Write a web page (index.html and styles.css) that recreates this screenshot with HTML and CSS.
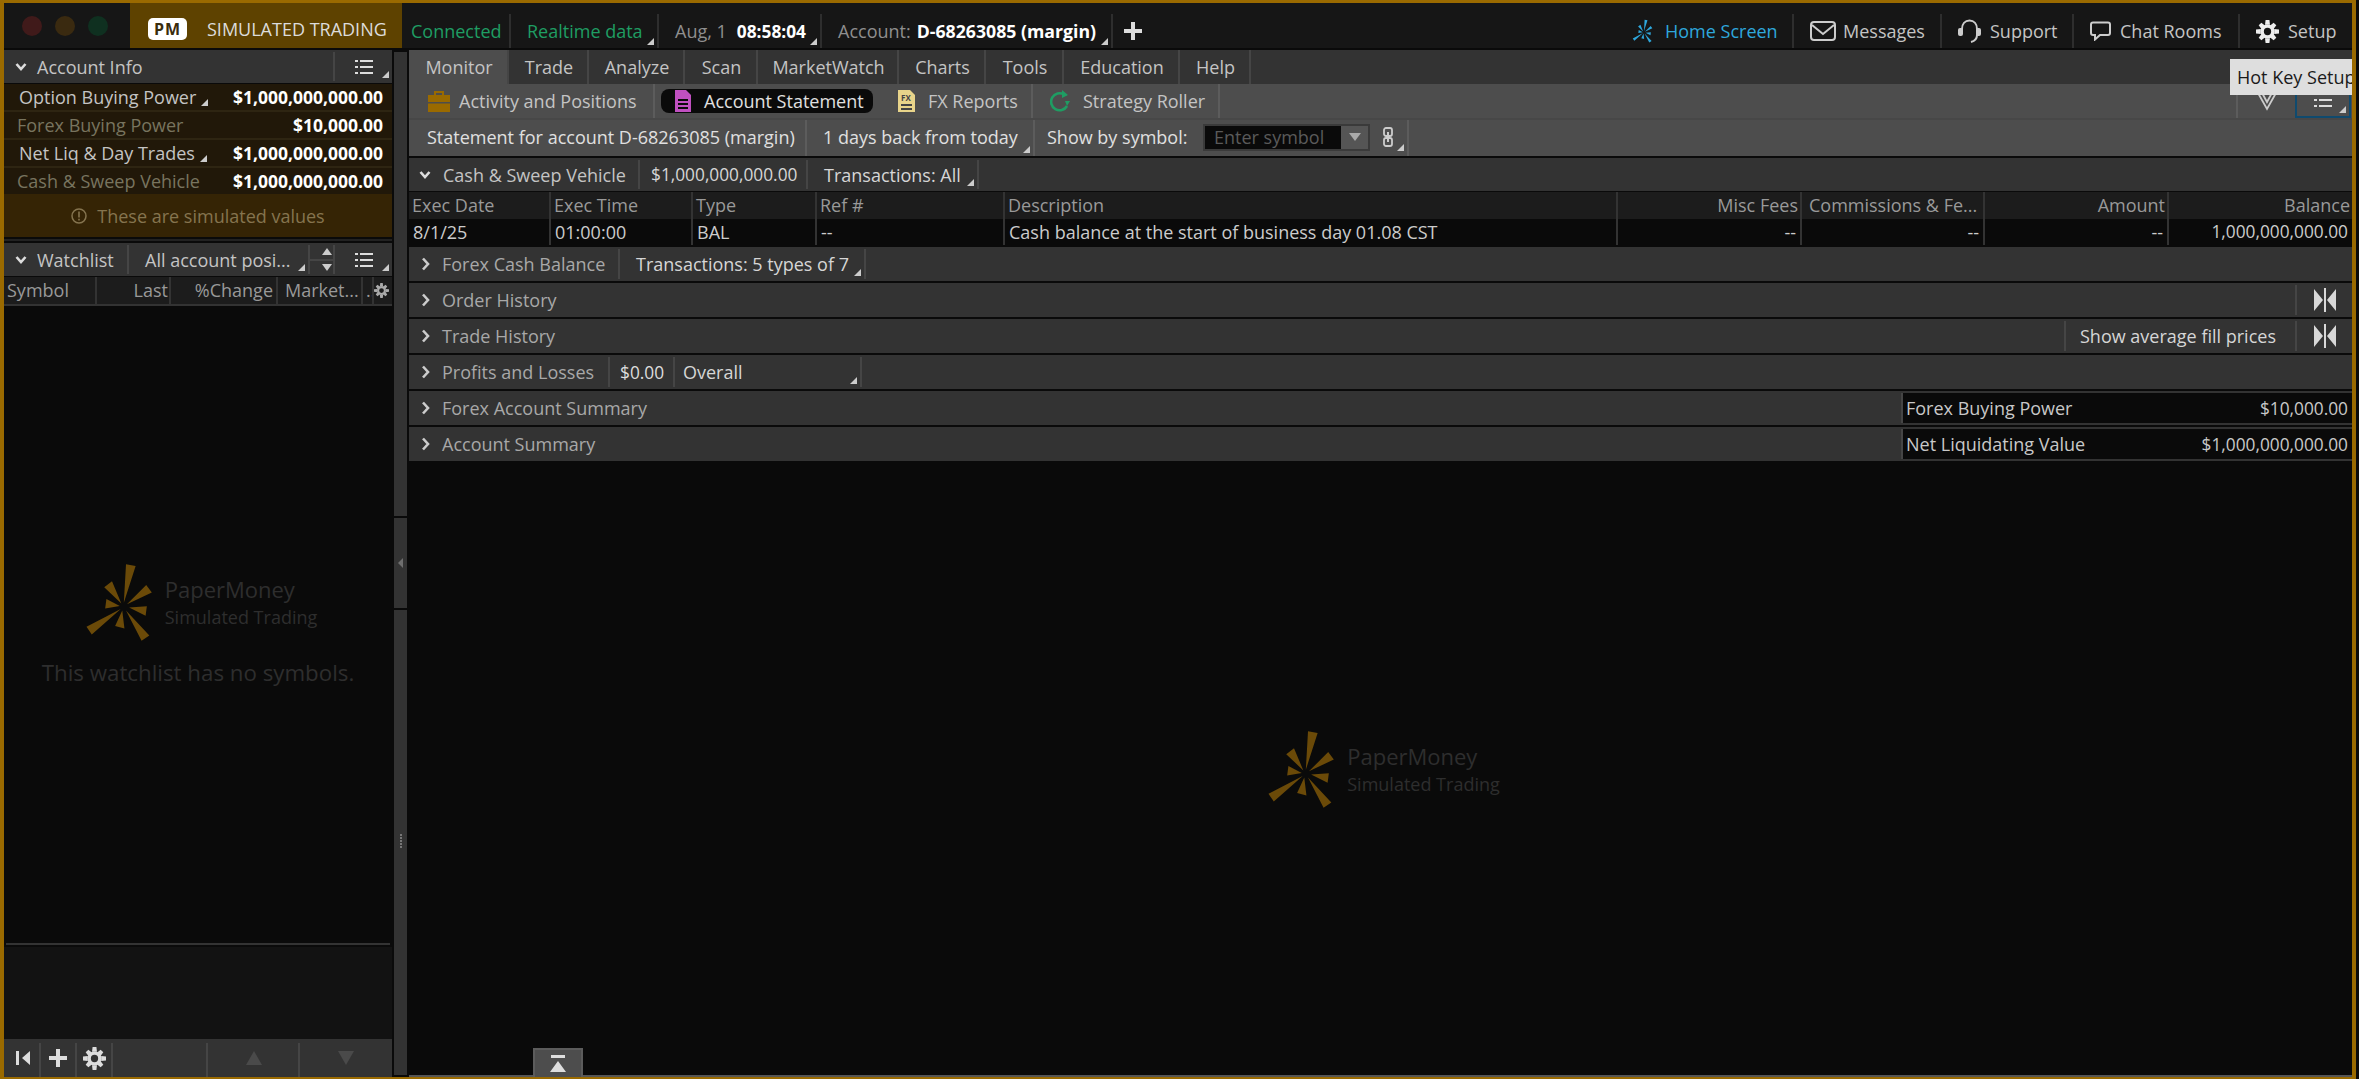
FILE: index.html
```html
<!DOCTYPE html>
<html>
<head lang="en">
    <meta charset="UTF-8">
    <title>Simulated Trading</title>
    <link rel="stylesheet" href="styles.css">
</head>
<body>
<svg class="sprite" width="0" height="0">
    <symbol id="burst" viewBox="70 60 225 255">
        <path d="M205 66L236 72L198 190Z M270 133L288 157L208 195Z M215 205L272 201L268 232Z M205 215L280 295L255 312Z M193 215L200 273L170 265Z M188 210L78 267L95 292Z M185 200L142 178L138 208Z M190 192L135 140L160 121Z"/>
    </symbol>
    <symbol id="list" viewBox="0 0 18 18">
        <path d="M0 2h3v2H0z M5 2h13v2H5z M0 8h3v2H0z M5 8h13v2H5z M0 14h3v2H0z M5 14h13v2H5z"/>
    </symbol>
    <symbol id="gear" viewBox="0 0 24 24">
        <circle cx="12" cy="12" r="5.5" fill="none" stroke="currentColor" stroke-width="3.4"/>
        <path d="M10 0h4l.6 5h-5.2z M10 24h4l.6-5h-5.2z M0 10v4l5 .6v-5.2z M24 10v4l-5 .6v-5.2z M2.8 5.6l2.8-2.8 4 3.1-3.7 3.7z M21.2 5.6l-2.8-2.8-4 3.1 3.7 3.7z M2.8 18.4l2.8 2.8 4-3.1-3.7-3.7z M21.2 18.4l-2.8 2.8-4-3.1 3.7-3.7z"/>
    </symbol>
    <symbol id="open" viewBox="0 0 12 10">
        <path d="M1.5 2L6 7L10.5 2" fill="none" stroke="currentColor" stroke-width="2.6"/>
    </symbol>
    <symbol id="shut" viewBox="0 0 10 14">
        <path d="M2 1.5L7 7L2 12.5" fill="none" stroke="currentColor" stroke-width="2.6"/>
    </symbol>
    <symbol id="squeeze" viewBox="0 0 22 24">
        <path d="M0 1L9 12L0 23Z M22 1L13 12L22 23Z M10 0h2v24h-2z"/>
    </symbol>
</svg>

<div class="frame">
    <!-- top bar -->
    <div class="titlebar">
        <div class="lights">
            <span class="light red"></span>
            <span class="light amber"></span>
            <span class="light green"></span>
        </div>
        <div class="sim">
            <span class="pm">PM</span>
            <span>SIMULATED TRADING</span>
        </div>
        <div class="tb w-conn good">Connected</div>
        <div class="tb w-data good drop">Realtime data</div>
        <div class="tb w-clock drop"><span class="dim">Aug, 1</span><b class="clock">08:58:04</b></div>
        <div class="tb w-acct drop"><span class="dim">Account:</span><b class="acct">D-68263085 (margin)</b></div>
        <div class="tb-plus"><svg width="18" height="18" viewBox="0 0 18 18"><path d="M7 0h4v7h7v4h-7v7H7v-7H0V7h7z"/></svg></div>
        <div class="tb w-home push home">
            <svg class="tb-ico burst" width="21" height="24"><use href="#burst"/></svg>Home Screen
        </div>
        <div class="tb w-msg">
            <svg class="tb-ico" width="26" height="20" viewBox="0 0 26 20"><rect x="1" y="1" width="24" height="18" rx="3" fill="none" stroke="#ccc" stroke-width="2"/><path d="M2 4L13 13L24 4" fill="none" stroke="#ccc" stroke-width="2"/></svg>Messages
        </div>
        <div class="tb w-sup">
            <svg class="tb-ico" width="23" height="24" viewBox="0 0 23 24"><path d="M4 14V10C4 5 7 1.500 11.500 1.500S19 5 19 10V16C19 20 17 22 13 23" fill="none" stroke="#ccc" stroke-width="2"/><rect x="0" y="9" width="5" height="8" rx="2" fill="#ccc"/><rect x="18" y="9" width="5" height="8" rx="2" fill="#ccc"/></svg>Support
        </div>
        <div class="tb w-chat">
            <svg class="tb-ico" width="21" height="20" viewBox="0 0 21 20"><path d="M3 1.500H18Q20 1.500 20 3.500V12Q20 14 18 14H10L5 18.500V14H3Q1 14 1 12V3.500Q1 1.500 3 1.500Z" fill="none" stroke="#ccc" stroke-width="2"/></svg>Chat Rooms
        </div>
        <div class="tb w-setup last">
            <svg class="tb-ico gear-w" width="23" height="23"><use href="#gear"/></svg>Setup
        </div>
    </div>

    <div class="content">
        <!-- left column -->
        <div class="side">
            <div class="bar side-head">
                <div class="cell w-sh1"><svg class="chev" width="12" height="10"><use href="#open"/></svg>Account Info</div>
                <div class="cell w-sh2 drop last"><svg class="list" width="18" height="18"><use href="#list"/></svg></div>
            </div>
            <div class="info">
                <div class="info-row"><span class="lab drop">Option Buying Power</span><b>$1,000,000,000.00</b></div>
                <div class="info-row"><span class="lab off">Forex Buying Power</span><b>$10,000.00</b></div>
                <div class="info-row"><span class="lab drop">Net Liq &amp; Day Trades</span><b>$1,000,000,000.00</b></div>
                <div class="info-row"><span class="lab off">Cash &amp; Sweep Vehicle</span><b>$1,000,000,000.00</b></div>
                <div class="notice">
                    <svg width="16" height="16" viewBox="0 0 16 16"><circle cx="8" cy="8" r="7" fill="none" stroke="#85744f" stroke-width="1.500"/><path d="M7.200 3.500h1.600v6H7.200z M7.200 10.800h1.600v1.700H7.200z" fill="#85744f"/></svg>
                    These are simulated values
                </div>
            </div>
            <div class="side-rule"></div>
            <div class="bar side-head">
                <div class="cell w-wl1"><svg class="chev" width="12" height="10"><use href="#open"/></svg>Watchlist</div>
                <div class="cell w-wl2 drop">All account posi...</div>
                <div class="cell w-wl3">
                    <span class="updn-box"><span class="updn up"></span></span>
                    <span class="updn-box"><span class="updn dn"></span></span>
                </div>
                <div class="cell w-wl4 drop last"><svg class="list" width="18" height="18"><use href="#list"/></svg></div>
            </div>
            <div class="wl-cols">
                <div>Symbol</div>
                <div class="r">Last</div>
                <div class="r">%Change</div>
                <div>Market...</div>
                <div>..</div>
                <div class="wl-gear"><svg class="gear-g" width="15" height="15"><use href="#gear"/></svg></div>
            </div>
            <div class="wl-body">
                <div class="mark">
                    <svg class="mark-burst" width="70" height="82"><use href="#burst"/></svg>
                    <div>
                        <div class="mark-a">PaperMoney</div>
                        <div class="mark-b">Simulated Trading</div>
                    </div>
                </div>
                <div class="wl-empty">This watchlist has no symbols.</div>
            </div>
            <div class="side-rule2"></div>
            <div class="wl-detail"></div>
            <div class="side-foot">
                <div class="fcell w-f1"><svg width="14" height="14" viewBox="0 0 14 14"><path d="M0 0h3v14H0z M14 0v14L6 7z"/></svg></div>
                <div class="fcell w-f2"><svg width="18" height="18" viewBox="0 0 18 18"><path d="M7 0h4v7h7v4h-7v7H7v-7H0V7h7z"/></svg></div>
                <div class="fcell w-f2"><svg class="gear-f" width="23" height="23"><use href="#gear"/></svg></div>
                <div class="fcell w-f3"></div>
                <div class="fcell w-f4"><span class="arrow-up"></span></div>
                <div class="fcell w-f5"><span class="arrow-dn"></span></div>
            </div>
        </div>

        <!-- splitter -->
        <div class="splitter">
            <div class="sp-a"></div>
            <div class="sp-b"><span class="sp-tri"></span></div>
            <div class="sp-c"><span class="sp-dots"></span></div>
        </div>

        <!-- main column -->
        <div class="main">
            <div class="tabs">
                <div class="tab on">Monitor</div>
                <div class="tab">Trade</div>
                <div class="tab">Analyze</div>
                <div class="tab">Scan</div>
                <div class="tab">MarketWatch</div>
                <div class="tab">Charts</div>
                <div class="tab">Tools</div>
                <div class="tab">Education</div>
                <div class="tab">Help</div>
            </div>
            <div class="subtabs">
                <div class="sub w-s1">
                    <svg class="sub-ico" width="22" height="22" viewBox="0 0 22 22"><path d="M6 5V1h10v4h-2V3H8v2z M0 5h22v7H0z M0 13.500h22V22H0z" fill="#9a6a00"/></svg>Activity and Positions
                </div>
                <div class="sub-pill">
                    <svg class="sub-ico" width="16" height="22" viewBox="0 0 16 22"><path d="M0 0h11l5 5v17H0z" fill="#c050c0"/><path d="M3 9h10v2H3z M3 13h10v2H3z M3 17h10v2H3z" fill="#0a0a0a"/></svg>Account Statement
                </div>
                <div class="sub w-s3">
                    <svg class="sub-ico" width="17" height="22" viewBox="0 0 17 22"><path d="M0 0h12l5 5v17H0z" fill="#e8d48a"/><text x="3" y="11" class="fx">FX</text><path d="M3 14h11v2H3z M3 18h11v2H3z" fill="#444"/></svg>FX Reports
                </div>
                <div class="sub w-s4">
                    <svg class="sub-ico" width="20" height="22" viewBox="0 0 20 22"><path d="M14 4.500A8.500 8.500 0 1 0 17 16" fill="none" stroke="#1f9d63" stroke-width="2.600"/><path d="M12 0v8l6-3z M15 11h5l-3 5z" fill="#1f9d63"/></svg>Strategy Roller
                </div>
                <div class="sub-right">
                    <div class="sub-chev"><svg width="22" height="24" viewBox="0 0 22 24"><path d="M2 4L11 20L20 4M5 2L11 13L17 2" fill="none" stroke="#ccc" stroke-width="1.800"/></svg></div>
                    <div class="sub-hot drop"><svg class="list" width="18" height="18"><use href="#list"/></svg></div>
                </div>
            </div>
            <div class="stmt">
                <div class="sc w-t1">Statement for account D-68263085 (margin)</div>
                <div class="sc w-t2 drop">1 days back from today</div>
                <div class="sc w-t3">
                    <span class="sym-lab">Show by symbol:</span>
                    <div class="sym-input">
                        <span class="sym-ph">Enter symbol</span>
                        <span class="sym-btn"></span>
                    </div>
                    <div class="sym-link drop"><svg width="10" height="20" viewBox="0 0 10 20"><rect x="1" y="1" width="8" height="8" rx="2" fill="none" stroke="#ccc" stroke-width="1.800"/><rect x="1" y="11" width="8" height="8" rx="2" fill="none" stroke="#ccc" stroke-width="1.800"/><path d="M4 5h2v10H4z" fill="#ccc"/></svg></div>
                </div>
            </div>
            <div class="bar cash">
                <div class="cell w-c1"><svg class="chev" width="12" height="10"><use href="#open"/></svg>Cash &amp; Sweep Vehicle</div>
                <div class="cell w-c2 lit num">$1,000,000,000.00</div>
                <div class="cell w-c3 drop lit">Transactions: All</div>
            </div>
            <div class="tbl">
                <div class="th">Exec Date</div>
                <div class="th">Exec Time</div>
                <div class="th">Type</div>
                <div class="th">Ref #</div>
                <div class="th">Description</div>
                <div class="th r">Misc Fees</div>
                <div class="th comm">Commissions &amp; Fe...</div>
                <div class="th r">Amount</div>
                <div class="th r end">Balance</div>
                <div class="td">8/1/25</div>
                <div class="td">01:00:00</div>
                <div class="td">BAL</div>
                <div class="td">--</div>
                <div class="td">Cash balance at the start of business day 01.08 CST</div>
                <div class="td r">--</div>
                <div class="td r">--</div>
                <div class="td r">--</div>
                <div class="td r end num">1,000,000,000.00</div>
            </div>
            <div class="bar sec">
                <div class="cell w-d1"><svg class="chev2" width="10" height="14"><use href="#shut"/></svg>Forex Cash Balance</div>
                <div class="cell w-d2 drop lit">Transactions: 5 types of 7</div>
            </div>
            <div class="bar sec">
                <div class="plain"><svg class="chev2" width="10" height="14"><use href="#shut"/></svg>Order History</div>
                <div class="cell cap w-cap"><svg class="sq" width="22" height="24"><use href="#squeeze"/></svg></div>
            </div>
            <div class="bar sec">
                <div class="plain"><svg class="chev2" width="10" height="14"><use href="#shut"/></svg>Trade History</div>
                <div class="cell cap w-avg lit">Show average fill prices</div>
                <div class="cell cap w-cap"><svg class="sq" width="22" height="24"><use href="#squeeze"/></svg></div>
            </div>
            <div class="bar sec">
                <div class="cell w-p1"><svg class="chev2" width="10" height="14"><use href="#shut"/></svg>Profits and Losses</div>
                <div class="cell w-p2 lit num">$0.00</div>
                <div class="cell w-p3 drop lit">Overall</div>
            </div>
            <div class="bar sec">
                <div class="plain"><svg class="chev2" width="10" height="14"><use href="#shut"/></svg>Forex Account Summary</div>
                <div class="sumcell"><span>Forex Buying Power</span><span class="num">$10,000.00</span></div>
            </div>
            <div class="bar sec">
                <div class="plain"><svg class="chev2" width="10" height="14"><use href="#shut"/></svg>Account Summary</div>
                <div class="sumcell"><span>Net Liquidating Value</span><span class="num">$1,000,000,000.00</span></div>
            </div>
            <div class="main-body">
                <div class="mark">
                    <svg class="mark-burst" width="70" height="82"><use href="#burst"/></svg>
                    <div>
                        <div class="mark-a">PaperMoney</div>
                        <div class="mark-b">Simulated Trading</div>
                    </div>
                </div>
            </div>
            <div class="pull"><svg width="16" height="18" viewBox="0 0 16 18"><path d="M1 0h14v3H1z M8 6l8 11H0z"/></svg></div>
            <div class="tip">Hot Key Setup</div>
        </div>
    </div>
</div>
</body>
</html>
```

FILE: styles.css
```css
* {
    margin: 0;
    padding: 0;
    box-sizing: border-box;
}
html, body {
    width: 2359px;
    height: 1079px;
    overflow: hidden;
    background: #0a0a0a;
}
body {
    font-family: "Open Sans", "Liberation Sans", sans-serif;
    font-size: 18px;
    color: #c4c4c4;
}
.sprite {
    position: absolute;
}
.frame {
    width: 2356px;
    height: 1079px;
    border-top: 3px solid #9a6a00;
    border-left: 4px solid #9a6a00;
    border-right: 4px solid #9a6a00;
    border-bottom: 2px solid #9a6a00;
    display: flex;
    flex-direction: column;
}
.r {
    text-align: right;
}
.num {
    font-size: 17.300px;
}

/* corner mark on menus */
.drop {
    position: relative;
}
.drop::after {
    content: "";
    position: absolute;
    right: 3px;
    bottom: 3px;
    border-style: solid;
    border-width: 0 0 7px 7px;
    border-color: transparent transparent #ccc transparent;
}

/* top bar */
.titlebar {
    height: 45px;
    flex: none;
    background: #161616;
    display: flex;
    margin-bottom: 2px;
}
.lights {
    width: 126px;
    display: flex;
    align-items: center;
    gap: 13px;
    padding: 0 0 0 18px;
}
.light {
    width: 20px;
    height: 20px;
    border-radius: 50%;
}
.red { background: #401a1a; }
.amber { background: #3a2a10; }
.green { background: #0f3020; }
.sim {
    width: 272px;
    background: #5e4200;
    color: #dcdcdc;
    display: flex;
    align-items: center;
    padding: 6px 0 0 18px;
    gap: 20px;
    white-space: nowrap;
}
.pm {
    width: 39px;
    height: 22px;
    background: #fff;
    border-radius: 5px;
    color: #3a2c0c;
    font-weight: 700;
    font-size: 16px;
    letter-spacing: 1px;
    line-height: 22px;
    text-align: center;
    flex: none;
}
.tb {
    margin-top: 11px;
    display: flex;
    align-items: center;
    border-right: 2px solid #2e2e2e;
    padding-left: 16px;
    white-space: nowrap;
}
.tb.last {
    border-right: 0;
}
.good { color: #1f9d63; }
.dim { color: #8f8f8f; }
.clock {
    color: #fff;
    font-size: 17.300px;
    margin-left: 10px;
}
.acct {
    color: #fff;
    font-size: 17.700px;
    margin-left: 6px;
}
.w-conn { width: 109px; padding-left: 9px; }
.w-data { width: 148px; }
.w-clock { width: 163px; }
.w-acct { width: 291px; }
.tb-plus {
    margin: 11px 0 0 11px;
    display: flex;
    align-items: center;
}
.tb-plus svg { fill: #ddd; }
.push { margin-left: auto; }
.home { color: #2ea7dc; }
.burst { fill: #2ea7dc; }
.tb-ico { margin-right: 9px; flex: none; }
.home .tb-ico { margin-right: 12px; }
.w-msg .tb-ico { margin-right: 7px; }
.gear-w { fill: #eee; color: #eee; }
.w-home { width: 178px; }
.w-msg { width: 148px; }
.w-sup { width: 132px; }
.w-chat { width: 166px; }
.w-setup { width: 112px; }

.content {
    flex: 1;
    display: flex;
    min-height: 0;
}

/* left column */
.side {
    width: 388px;
    flex: none;
    display: flex;
    flex-direction: column;
}
.bar {
    display: flex;
    background: #333;
    flex: none;
}
.cell {
    display: flex;
    align-items: center;
    position: relative;
    white-space: nowrap;
    border-right: 2px solid #454545;
    margin: 2px 0;
}
.cell.last {
    border-right: 0;
}
.side-head {
    height: 33px;
    margin-bottom: 1px;
}
.chev {
    color: #ddd;
    margin: 0 10px 0 11px;
}
.list { fill: #ddd; }
.w-sh1 { width: 331px; }
.w-sh2 { width: 57px; justify-content: center; }
.w-wl1 { width: 125px; }
.w-wl2 { width: 181px; padding-left: 16px; }
.w-wl3 {
    width: 25px;
    flex-direction: column;
    align-items: stretch;
}
.w-wl4 { width: 57px; justify-content: center; }
.updn-box {
    flex: 1;
    display: flex;
    align-items: center;
    justify-content: flex-end;
    padding-right: 1px;
}
.updn-box:first-child {
    border-bottom: 2px solid #454545;
}
.updn {
    width: 0;
    height: 0;
    border-left: 5px solid transparent;
    border-right: 5px solid transparent;
}
.up { border-bottom: 7px solid #ccc; }
.dn { border-top: 7px solid #ccc; }
.info {
    background: #211809;
    display: flex;
    flex-direction: column;
}
.info-row {
    height: 28px;
    border-bottom: 2px solid #2e2512;
    display: flex;
    justify-content: space-between;
    align-items: center;
    padding: 0 9px 0 15px;
    white-space: nowrap;
}
.info-row b {
    color: #fff;
    font-size: 17.500px;
}
.lab {
    display: block;
    padding-right: 15px;
}
.lab.off {
    color: #78745f;
    margin-left: -2px;
}
.info-row:nth-child(4) {
    border-bottom: 0;
    height: 26px;
}
.notice {
    height: 43px;
    background: #352405;
    color: #85744f;
    display: flex;
    align-items: center;
    justify-content: center;
    gap: 10px;
}
.side-rule {
    height: 6px;
    border-top: 2px solid #0a0a0a;
    border-bottom: 2px solid #0a0a0a;
    background: #222;
    flex: none;
}
.wl-cols {
    height: 29px;
    flex: none;
    background: #1c1c1c;
    border-bottom: 2px solid #333;
    display: grid;
    grid-template-columns: 93px 74px 107px 85px 11px 18px;
    color: #999;
    line-height: 27px;
}
.wl-cols > div {
    border-right: 2px solid #333;
    padding: 0 3px;
    white-space: nowrap;
    overflow: hidden;
}
.wl-cols > div:first-child { padding-left: 3px; }
.wl-cols > div:nth-child(2) { padding-right: 1px; }
.wl-cols > div:nth-child(4) { padding-left: 7px; }
.wl-cols .wl-gear {
    border-right: 0;
    padding: 0;
    width: auto;
    overflow: visible;
}
.gear-g { fill: #aaa; color: #aaa; display: block; margin-top: 6px; }
.wl-body {
    flex: 1;
    background: #0a0a0a;
    display: flex;
    flex-direction: column;
    align-items: center;
    justify-content: center;
}
.mark {
    display: flex;
    align-items: center;
    gap: 11px;
    margin-left: 5px;
}
.mark-burst { fill: #6b4a08; }
.mark-a {
    font-size: 22px;
    color: #2e2e2e;
    line-height: 30px;
}
.mark-b {
    font-size: 18px;
    color: #2e2e2e;
    line-height: 26px;
}
.wl-empty {
    font-size: 22.300px;
    color: #2e2e2e;
    margin-top: 14px;
}
.side-rule2 {
    height: 2px;
    background: #333;
    margin: 0 2px;
    flex: none;
}
.wl-detail {
    height: 94px;
    flex: none;
    background: #121212;
    border-top: 2px solid #0a0a0a;
}
.side-foot {
    height: 38px;
    flex: none;
    background: #333;
    display: flex;
    padding-top: 4px;
}
.fcell {
    border-right: 2px solid #454545;
    display: flex;
    align-items: center;
    justify-content: center;
    padding-bottom: 4px;
}
.fcell svg { fill: #ddd; color: #ddd; }
.w-f1 { width: 37px; padding-left: 2px; }
.w-f2 { width: 36px; }
.w-f3 { width: 95px; }
.w-f4 { width: 92px; padding-left: 2px; }
.w-f5 { width: 92px; border-right: 0; }
.arrow-up, .arrow-dn {
    width: 0;
    height: 0;
    border-left: 8px solid transparent;
    border-right: 8px solid transparent;
}
.arrow-up { border-bottom: 14px solid #4a4a4a; }
.arrow-dn { border-top: 14px solid #4a4a4a; }

/* splitter */
.splitter {
    width: 13px;
    flex: none;
    margin: 2px 2px 2px 2px;
    display: flex;
    flex-direction: column;
    gap: 2px;
}
.sp-a { height: 464px; background: #333; }
.sp-b {
    height: 90px;
    background: #333;
    display: flex;
    align-items: center;
    justify-content: center;
}
.sp-tri {
    width: 0;
    height: 0;
    border-top: 5px solid transparent;
    border-bottom: 5px solid transparent;
    border-right: 5px solid #6e6e6e;
}
.sp-c {
    flex: 1;
    background: #333;
    display: flex;
    flex-direction: column;
    align-items: center;
}
.sp-dots {
    margin-top: 224px;
    width: 2px;
    height: 15px;
    background: repeating-linear-gradient(#777 0 2px, transparent 2px 3px);
}

/* main column */
.main {
    flex: 1;
    min-width: 0;
    display: flex;
    flex-direction: column;
    position: relative;
}
.tabs {
    height: 34px;
    flex: none;
    background: #333;
    display: grid;
    grid-template-columns: 100px 80px 96px 73px 141px 87px 78px 116px 71px;
    justify-content: start;
}
.tab {
    border-right: 2px solid #454545;
    display: flex;
    align-items: center;
    justify-content: center;
    background: #333;
    padding-left: 2px;
}
.tab.on {
    background: #4d4d4d;
}
.subtabs {
    height: 34px;
    flex: none;
    background: #4d4d4d;
    display: flex;
    color: #c4c4c4;
}
.sub {
    display: flex;
    align-items: center;
    border-right: 2px solid #5c5c5c;
    white-space: nowrap;
}
.sub-ico {
    margin-right: 13px;
    flex: none;
}
.w-s1 { width: 246px; padding-left: 19px; }
.w-s1 .sub-ico { margin-right: 9px; }
.sub-pill {
    width: 212px;
    margin: 5px 6px 5px 6px;
    background: #0a0a0a;
    border-radius: 8px;
    display: flex;
    align-items: center;
    padding-left: 14px;
    color: #e0e0e0;
    white-space: nowrap;
}
.w-s3 { width: 154px; padding-left: 19px; }
.w-s4 { width: 187px; padding-left: 17px; }
.fx {
    font-size: 8px;
    font-weight: 700;
    fill: #444;
}
.sub-right {
    margin-left: auto;
    display: flex;
}
.sub-chev {
    width: 59px;
    border-left: 2px solid #5c5c5c;
    display: flex;
    align-items: center;
    justify-content: center;
}
.sub-hot {
    width: 56px;
    border: 2px solid #0f4a6e;
    border-top: 0;
    margin-right: 1px;
    display: flex;
    align-items: center;
    justify-content: center;
}
.stmt {
    height: 38px;
    flex: none;
    background: #4d4d4d;
    border-top: 2px solid #474747;
    display: flex;
    margin-bottom: 2px;
    color: #e0e0e0;
}
.sc {
    display: flex;
    align-items: center;
    white-space: nowrap;
    border-right: 2px solid #5c5c5c;
    padding-bottom: 2px;
}
.w-t1 { width: 398px; padding-left: 18px; }
.w-t2 { width: 228px; padding-left: 16px; }
.w-t3 { width: 374px; padding-left: 12px; }
.sym-lab { width: 156px; flex: none; }
.sym-input {
    width: 167px;
    height: 27px;
    background: #0a0a0a;
    border: 2px solid #3a3a3a;
    display: flex;
    align-items: center;
    justify-content: space-between;
    padding-left: 9px;
    flex: none;
}
.sym-ph {
    color: #5a5a5a;
}
.sym-btn {
    width: 27px;
    height: 100%;
    background: #555;
    display: flex;
    align-items: center;
    justify-content: center;
}
.sym-btn::after {
    content: "";
    border-left: 6px solid transparent;
    border-right: 6px solid transparent;
    border-top: 8px solid #aaa;
}
.sym-link {
    width: 28px;
    height: 34px;
    margin-left: 13px;
    display: flex;
    align-items: center;
}
.cash {
    height: 33px;
    margin-bottom: 1px;
}
.chev2 {
    color: #ccc;
    margin: 0 11px 0 12px;
    flex: none;
}
.cash .chev {
    margin: 0 12px 0 10px;
}
.lit { color: #d6d6d6; }
.w-c1 { width: 231px; }
.w-c2 { width: 168px; padding-left: 11px; }
.w-c3 { width: 171px; padding-left: 16px; }
.tbl {
    display: grid;
    flex: none;
    grid-template-columns: 142px 142px 124px 188px 613px 184px 183px 184px 183px;
    grid-template-rows: 27px 26px;
    margin-bottom: 2px;
}
.th, .td {
    border-right: 2px solid #333;
    padding: 0 4px;
    white-space: nowrap;
    overflow: hidden;
    line-height: 26px;
}
.th {
    background: #1c1c1c;
    color: #999;
    padding-left: 3px;
}
.th.r {
    padding-right: 2px;
}
.th.comm {
    padding-left: 7px;
}
.td {
    background: #0a0a0a;
    color: #ccc;
}
.th.end, .td.end {
    border-right: 0;
}
.sec {
    height: 34px;
    margin-bottom: 2px;
    color: #a8a8a8;
}
.w-d1 { width: 211px; }
.w-d2 { width: 246px; padding-left: 16px; }
.plain {
    display: flex;
    align-items: center;
    flex: 1;
    white-space: nowrap;
}
.cap { height: 30px; }
.sec .cap { border-left: 2px solid #454545; border-right: 0; }
.w-avg { width: 231px; padding-left: 14px; }
.w-cap { width: 57px; justify-content: center; }
.sq { fill: #d8d8d8; }
.w-p1 { width: 201px; }
.w-p2 { width: 65px; padding-left: 10px; color: #ddd; }
.w-p3 { width: 187px; padding-left: 8px; }
.sumcell {
    width: 451px;
    margin: 2px 0;
    background: #0a0a0a;
    border-left: 2px solid #454545;
    display: flex;
    align-items: center;
    justify-content: space-between;
    padding: 0 4px 0 3px;
    color: #c8c8c8;
}
.main-body {
    flex: 1;
    background: #0a0a0a;
    border-bottom: 2px solid #555;
    display: flex;
    align-items: center;
    justify-content: center;
}

/* overlays */
.pull {
    position: absolute;
    left: 124px;
    bottom: 0;
    width: 50px;
    height: 29px;
    background: #4d4d4d;
    border: 2px solid #5c5c5c;
    border-bottom: 0;
    display: flex;
    align-items: center;
    justify-content: center;
}
.pull svg { fill: #ddd; }
.tip {
    position: absolute;
    right: 0;
    top: 9px;
    width: 122px;
    height: 36px;
    background: #dedede;
    color: #1a1a1a;
    line-height: 36px;
    padding-left: 7px;
    white-space: nowrap;
    overflow: hidden;
}
```
